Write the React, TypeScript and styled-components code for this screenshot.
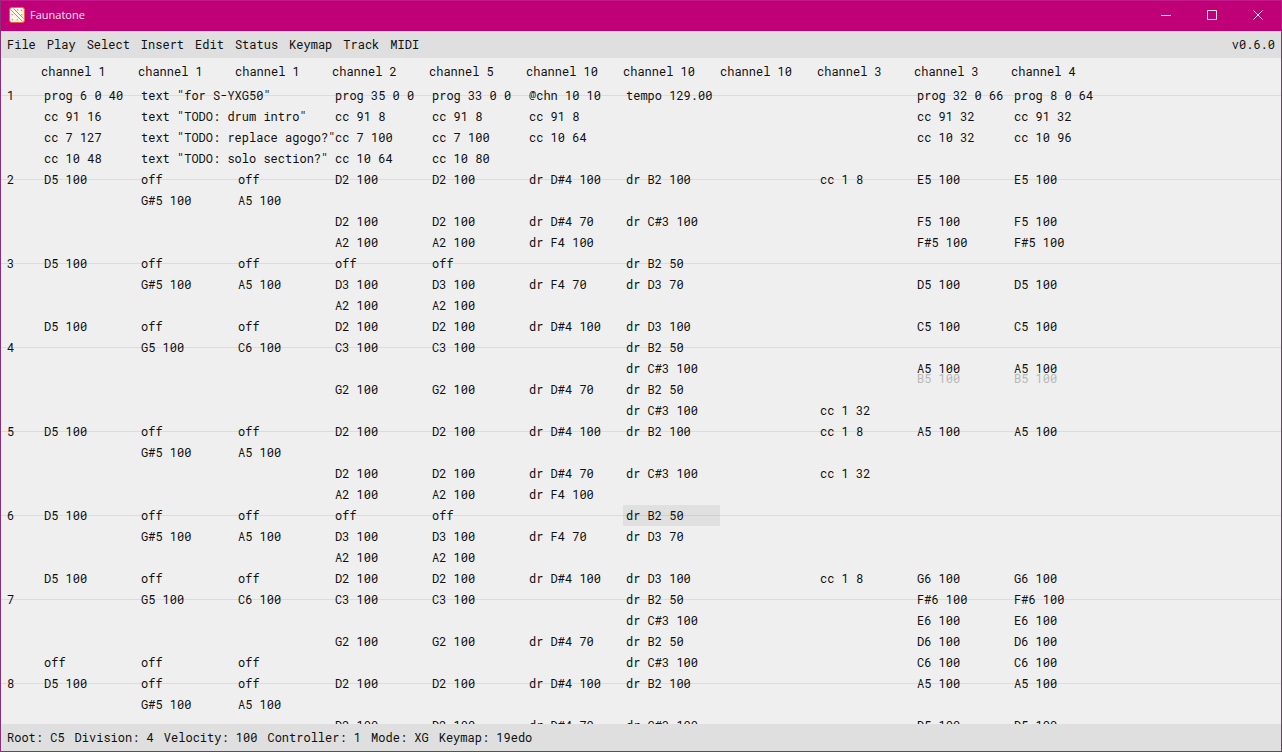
import React from 'react';
import styled, { createGlobalStyle } from 'styled-components';

const GlobalStyle = createGlobalStyle`
  * { box-sizing: border-box; }
  body { margin: 0; }
`;

const mono = '"Roboto Mono", "Noto Sans Mono CJK JP", "Liberation Mono", monospace';

const Window = styled.div`
  display: flex;
  flex-direction: column;
  height: 100vh;
  overflow: hidden;
  border: 1px solid #8c2f78;
  border-top: 0;
  background: #efefef;
  color: #101010;
  font: 12px/21px ${mono};
  white-space: pre;
`;

const TitleBar = styled.header`
  display: flex;
  flex: none;
  align-items: center;
  height: 31px;
  margin-left: -1px;
  padding: 0 0 2px 9px;
  border-top: 1px solid #c5188a;
  background: #bf0077;
  color: #fbe6f3;
`;

const Title = styled.h1`
  flex: 1;
  margin: 0;
  padding-left: 5px;
  font: 400 11px/16px "Open Sans", "Noto Sans", sans-serif;
`;

const WindowButton = styled.button`
  display: grid;
  place-items: center;
  width: 46px;
  height: 28px;
  padding: 0;
  border: 0;
  background: none;
  color: inherit;
`;

const Bar = styled.div<{ $gap: number }>`
  display: flex;
  flex: none;
  align-items: center;
  gap: ${(p) => p.$gap}px;
  height: 27px;
  padding: 0 6px;
  background: #dfdfdf;
`;

const MenuButton = styled.button`
  padding: 0;
  border: 0;
  background: none;
  color: inherit;
  font: inherit;
`;

const Version = styled.span`
  margin-left: auto;
`;

const Pattern = styled.main`
  flex: 1;
  min-height: 0;
  overflow: hidden;
`;

const Grid = styled.table`
  width: 100%;
  table-layout: fixed;
  border-collapse: collapse;
`;

const NumberColumn = styled.col`
  width: 40px;
`;

const TrackColumn = styled.col`
  width: 97px;
`;

const TrackHeading = styled.th`
  height: 27px;
  padding: 0;
  font-weight: 400;
  text-align: left;
`;

const Row = styled.tr<{ $beat: boolean }>`
  height: 21px;
  ${(p) => p.$beat && 'background: linear-gradient(#dcdcdc, #dcdcdc) 0 10px / 100% 1px no-repeat;'}
`;

const BeatNumber = styled.th`
  padding: 0 0 0 6px;
  font-weight: 400;
  text-align: left;
`;

const Cell = styled.td<{ $selected?: boolean }>`
  position: relative;
  padding: 0 0 0 3px;
  background: ${(p) => (p.$selected ? 'rgba(0, 0, 0, 0.06)' : 'none')};
`;

const Event = styled.span`
  position: relative;
  z-index: 1;
`;

const OffGridEvent = styled.span`
  position: absolute;
  top: 10px;
  left: 3px;
  color: #b8b8b8;
`;

const menus = ['File', 'Play', 'Select', 'Insert', 'Edit', 'Status', 'Keymap', 'Track', 'MIDI'];
const channels = [1, 1, 1, 2, 5, 10, 10, 10, 3, 3, 4];
const status = ['Root: C5', 'Division: 4', 'Velocity: 100', 'Controller: 1', 'Mode: XG', 'Keymap: 19edo'];

// One line per row, one field per track; "a/b" puts b half a row below a.
const rows = `
prog 6 0 40|text "for S-YXG50"||prog 35 0 0|prog 33 0 0|@chn 10 10|tempo 129.00|||prog 32 0 66|prog 8 0 64
cc 91 16|text "TODO: drum intro"||cc 91 8|cc 91 8|cc 91 8||||cc 91 32|cc 91 32
cc 7 127|text "TODO: replace agogo?"||cc 7 100|cc 7 100|cc 10 64||||cc 10 32|cc 10 96
cc 10 48|text "TODO: solo section?"||cc 10 64|cc 10 80||||||
D5 100|off|off|D2 100|D2 100|dr D#4 100|dr B2 100||cc 1 8|E5 100|E5 100
|G#5 100|A5 100||||||||
|||D2 100|D2 100|dr D#4 70|dr C#3 100|||F5 100|F5 100
|||A2 100|A2 100|dr F4 100||||F#5 100|F#5 100
D5 100|off|off|off|off||dr B2 50||||
|G#5 100|A5 100|D3 100|D3 100|dr F4 70|dr D3 70|||D5 100|D5 100
|||A2 100|A2 100||||||
D5 100|off|off|D2 100|D2 100|dr D#4 100|dr D3 100|||C5 100|C5 100
|G5 100|C6 100|C3 100|C3 100||dr B2 50||||
||||||dr C#3 100|||A5 100/B5 100|A5 100/B5 100
|||G2 100|G2 100|dr D#4 70|dr B2 50||||
||||||dr C#3 100||cc 1 32||
D5 100|off|off|D2 100|D2 100|dr D#4 100|dr B2 100||cc 1 8|A5 100|A5 100
|G#5 100|A5 100||||||||
|||D2 100|D2 100|dr D#4 70|dr C#3 100||cc 1 32||
|||A2 100|A2 100|dr F4 100|||||
D5 100|off|off|off|off||dr B2 50||||
|G#5 100|A5 100|D3 100|D3 100|dr F4 70|dr D3 70||||
|||A2 100|A2 100||||||
D5 100|off|off|D2 100|D2 100|dr D#4 100|dr D3 100||cc 1 8|G6 100|G6 100
|G5 100|C6 100|C3 100|C3 100||dr B2 50|||F#6 100|F#6 100
||||||dr C#3 100|||E6 100|E6 100
|||G2 100|G2 100|dr D#4 70|dr B2 50|||D6 100|D6 100
off|off|off||||dr C#3 100|||C6 100|C6 100
D5 100|off|off|D2 100|D2 100|dr D#4 100|dr B2 100|||A5 100|A5 100
|G#5 100|A5 100||||||||
|||D2 100|D2 100|dr D#4 70|dr C#3 100|||D5 100|D5 100
`.trim().split('\n').map((line) => line.split('|'));

// The first beat starts on row 0 and lasts four rows, like every other one.
const rowsPerBeat = 4;
const cursor = { row: 20, track: 6 };

const Logo = () => (
  <svg width="16" height="16" viewBox="0 0 16 16" aria-hidden="true">
    <rect x="0.5" y="0.5" width="15" height="15" rx="2.5" fill="#fff6ea" stroke="#f0603c" />
    <path d="M1.5 2.5 L13.5 14.5 M4.5 1.5 L14.5 11.5" stroke="#f07c58" fill="none" />
    <g fill="#f08a60">
      <circle cx="3.2" cy="7.5" r="0.8" />
      <circle cx="3.4" cy="12.6" r="0.8" />
      <circle cx="8.3" cy="12.8" r="0.8" />
      <circle cx="12.4" cy="3.4" r="0.8" />
      <circle cx="8.6" cy="3" r="0.8" />
      <circle cx="12.8" cy="7.8" r="0.8" />
    </g>
  </svg>
);

const controls = [
  { label: 'Minimize', d: 'M0 5.5H10' },
  { label: 'Maximize', d: 'M0.5 0.5H9.5V9.5H0.5Z' },
  { label: 'Close', d: 'M0.5 0.5L9.5 9.5M9.5 0.5L0.5 9.5' },
];

export default function App() {
  return (
    <>
      <GlobalStyle />
      <Window>
        <TitleBar>
          <Logo />
          <Title>Faunatone</Title>
          {controls.map((c) => (
            <WindowButton key={c.label} type="button" aria-label={c.label}>
              <svg width="10" height="10" viewBox="0 0 10 10" fill="none" stroke="currentColor">
                <path d={c.d} />
              </svg>
            </WindowButton>
          ))}
        </TitleBar>
        <Bar as="nav" $gap={11}>
          {menus.map((m) => (
            <MenuButton key={m} type="button">{m}</MenuButton>
          ))}
          <Version>v0.6.0</Version>
        </Bar>
        <Pattern>
          <Grid>
            <colgroup>
              <NumberColumn />
              {channels.map((_, i) => <TrackColumn key={i} />)}
              <col />
            </colgroup>
            <thead>
              <tr>
                <td />
                {channels.map((c, i) => (
                  <TrackHeading key={i} scope="col">channel {c}</TrackHeading>
                ))}
                <td />
              </tr>
            </thead>
            <tbody>
              {rows.map((fields, r) => {
                const beat = r % rowsPerBeat === 0;
                return (
                  <Row key={r} $beat={beat}>
                    {beat ? <BeatNumber scope="row">{r / rowsPerBeat + 1}</BeatNumber> : <td />}
                    {fields.map((field, t) => {
                      const [event, late] = field.split('/');
                      return (
                        <Cell key={t} $selected={r === cursor.row && t === cursor.track}>
                          {late && <OffGridEvent>{late}</OffGridEvent>}
                          {event && <Event>{event}</Event>}
                        </Cell>
                      );
                    })}
                    <td />
                  </Row>
                );
              })}
            </tbody>
          </Grid>
        </Pattern>
        <Bar as="footer" $gap={10}>
          {status.map((s) => <span key={s}>{s}</span>)}
        </Bar>
      </Window>
    </>
  );
}
